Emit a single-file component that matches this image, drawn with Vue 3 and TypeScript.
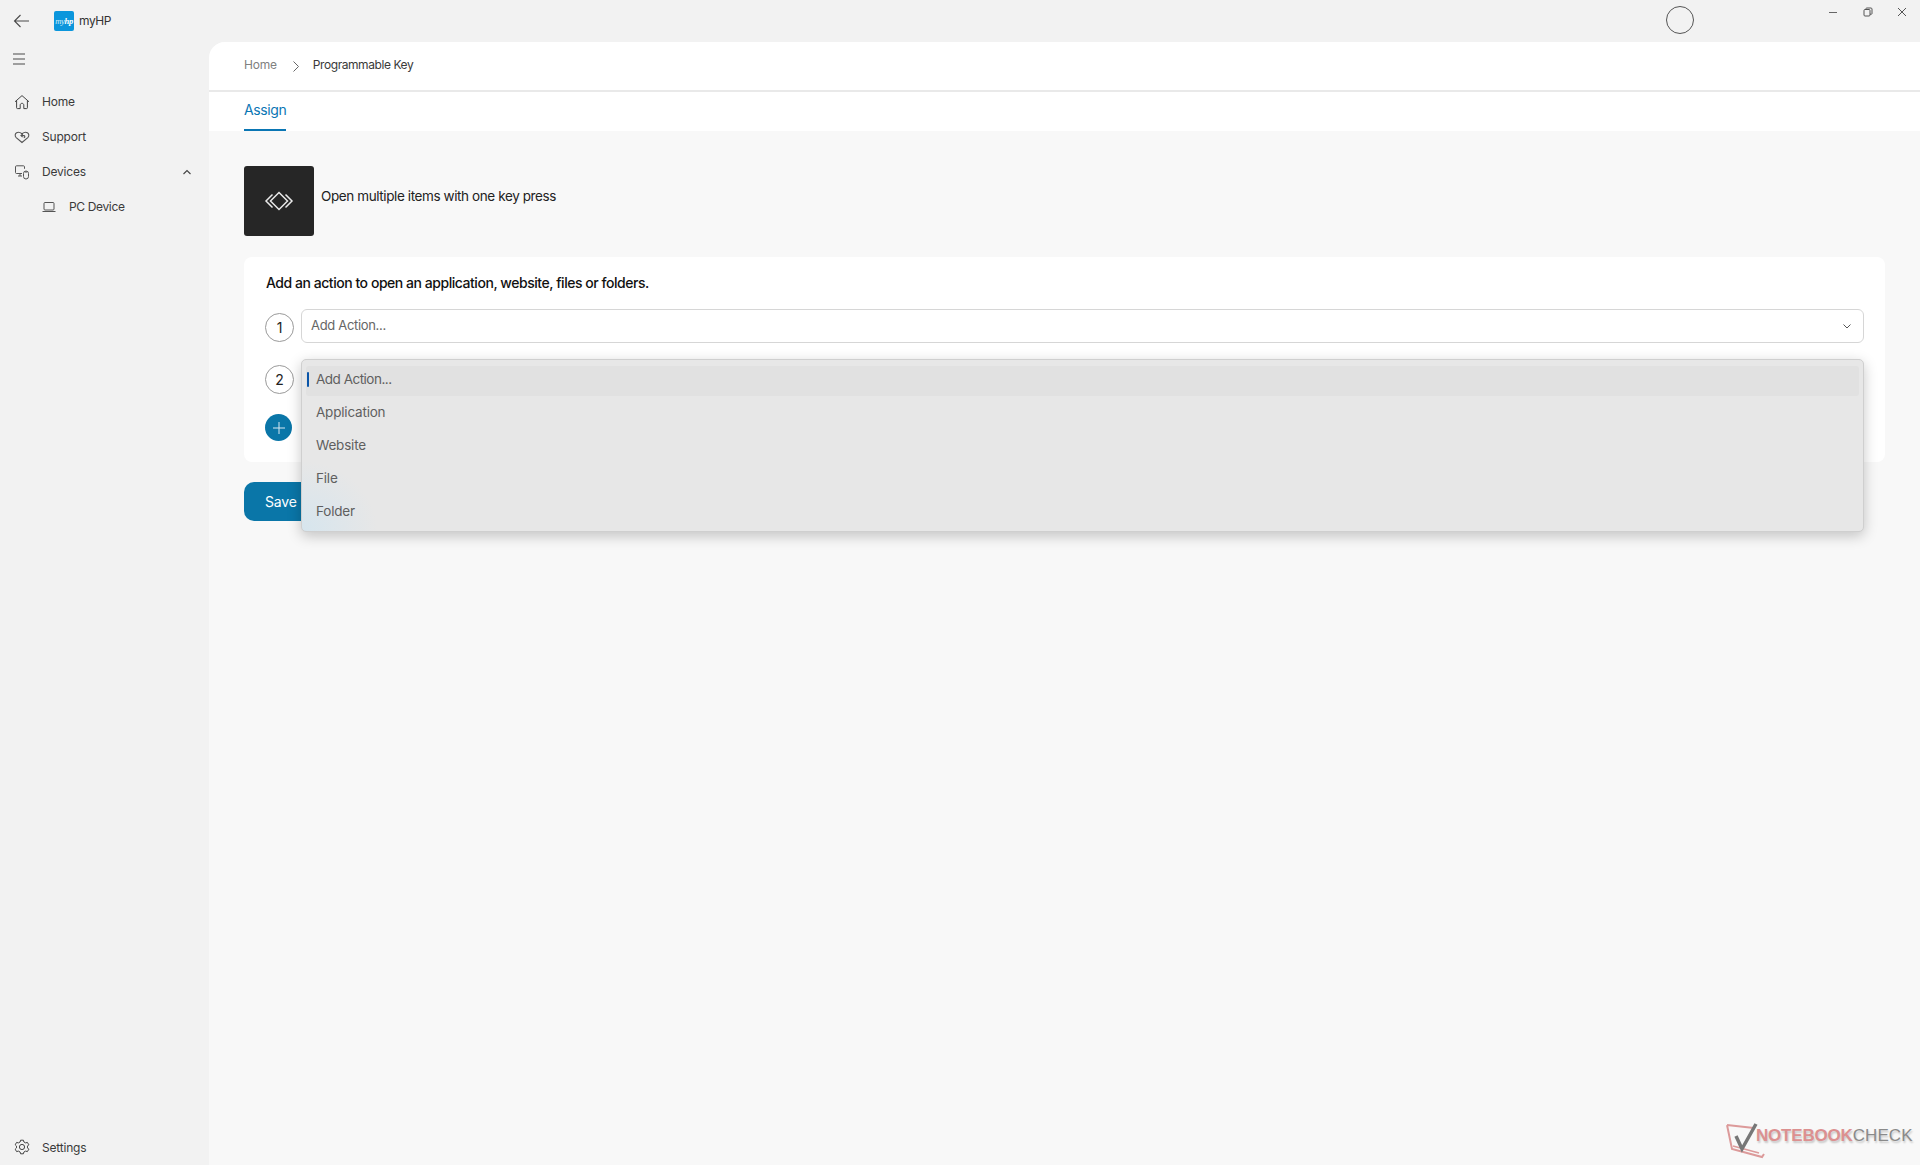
<script setup lang="ts">
const actions: string[] = ['Add Action...', 'Application', 'Website', 'File', 'Folder']
</script>

<template>
  <div class="app">
    <header class="titlebar">
      <button class="back" aria-label="Back">
        <svg width="18" height="14" viewBox="0 0 18 14" fill="none" stroke="#4a4a4a" stroke-width="1.1"><path d="M16 7H1.500M7.500 1 1.500 7l6 6" /></svg>
      </button>
      <div class="logo"><span>my<b>hp</b></span></div>
      <span class="appname">myHP</span>
      <span class="spacer"></span>
      <span class="ring"></span>
      <div class="winctl">
        <svg width="10" height="10" viewBox="0 0 10 10" fill="none" stroke="#666" stroke-width="1"><path d="M1 5.500h8" /></svg>
        <svg width="10" height="10" viewBox="0 0 10 10" fill="none" stroke="#555" stroke-width="1"><rect x="1" y="2.500" width="6" height="6.500" rx="1" /><path d="M3 2.500V1.600c0-.4.3-.6.6-.6H8c.6 0 1 .4 1 1v4.600c0 .4-.3.6-.6.6H7" /></svg>
        <svg width="10" height="10" viewBox="0 0 10 10" fill="none" stroke="#555" stroke-width="1"><path d="M1 1l8 8M9 1 1 9" /></svg>
      </div>
    </header>

    <div class="body">
      <aside class="sidebar">
        <button class="burger" aria-label="Menu">
          <svg width="14" height="12" viewBox="0 0 14 12" fill="none" stroke="#4a4a4a" stroke-width="1.1"><path d="M1 1h12M1 6h12M1 11h12" /></svg>
        </button>
        <nav class="nav">
          <a class="nav-item">
            <svg class="ico" width="16" height="16" viewBox="0 0 16 16" fill="none" stroke="#444" stroke-width="1"><path d="M1 7.800 8 1.600l7 6.200M2.600 6.600v7.200c0 .5.3.8.8.8h2.800v-3.500c0-1 .8-1.800 1.800-1.800s1.800.8 1.800 1.800v3.500h2.800c.5 0 .8-.3.8-.8V6.600" /></svg>
            <span>Home</span>
          </a>
          <a class="nav-item">
            <svg class="ico" width="16" height="16" viewBox="0 0 16 16" fill="none" stroke="#555" stroke-width="1.100"><path d="M8 13.500 2.200 8.600C.6 7 1 4.600 2.600 3.700c1.700-.9 3.600-.4 5.400 1 1.800-1.400 3.700-1.900 5.400-1 1.600.9 2 3.300.4 4.900L8 13.500Z" /><path d="M9.800 8.800c.9-.3 1.200-1 1-1.600-.3-.7-1.200-1-3.500-.7M8.800 5 7 6.500l1.600 1.500" /></svg>
            <span>Support</span>
          </a>
          <a class="nav-item">
            <svg class="ico" width="16" height="16" viewBox="0 0 16 16" fill="none" stroke="#555" stroke-width="1"><path d="M8 9.500H2.500c-.6 0-1-.4-1-1V2.800c0-.6.4-1 1-1h7c.6 0 1 .4 1 1v2M4 12h4M6 9.500V12" /><rect x="9.500" y="7" width="5" height="8" rx="2.500" /><path d="M12 7v2" /></svg>
            <span>Devices</span>
            <svg class="caret" width="10" height="6" viewBox="0 0 10 6" fill="none" stroke="#444" stroke-width="1.100"><path d="M1.500 5 5 1.500 8.500 5" /></svg>
          </a>
          <a class="nav-item sub">
            <svg class="ico" width="14" height="12" viewBox="0 0 14 12" fill="none" stroke="#555" stroke-width="1"><rect x="2" y="1.500" width="10" height="7.500" rx="1" /><path d="M.5 10.500h13" /></svg>
            <span>PC Device</span>
          </a>
        </nav>
        <a class="nav-item settings">
          <svg class="ico" width="16" height="16" viewBox="0 0 16 16" fill="none" stroke="#444" stroke-width="1"><path d="M6.600 1.200h2.800l.5 1.800 1.700.9 1.800-.5 1.400 2.400-1.300 1.300v1.800l1.300 1.300-1.400 2.400-1.800-.5-1.700.9-.5 1.800H6.600l-.5-1.800-1.700-.9-1.800.5-1.400-2.400 1.300-1.300V7.100L1.200 5.800l1.400-2.400 1.800.5 1.700-.9.5-1.800Z" /><circle cx="8" cy="8" r="2.600" /></svg>
          <span>Settings</span>
        </a>
      </aside>

      <main class="main">
        <div class="crumbs">
          <span class="crumb-home">Home</span>
          <svg width="8" height="12" viewBox="0 0 8 12" fill="none" stroke="#666" stroke-width="1"><path d="M1.500 1.500 6.500 6.500 1.500 11.500" /></svg>
          <span class="crumb-current">Programmable Key</span>
        </div>
        <div class="tabs"><span class="tab">Assign</span></div>

        <section class="content">
          <div class="intro">
            <div class="tile">
              <svg width="30" height="20" viewBox="0 0 30 20" fill="none" stroke="#e8e8e8" stroke-width="1.500"><path d="M15 1.500 23.500 10 15 18.500 6.500 10Z" /><path d="M8.500 3.500 2 10l6.500 6.500M21.500 3.500 28 10l-6.500 6.500" /></svg>
            </div>
            <p>Open multiple items with one key press</p>
          </div>

          <div class="card">
            <h2>Add an action to open an application, website, files or folders.</h2>
            <div class="row first">
              <span class="num">1</span>
              <div class="select">
                <span>Add Action...</span>
                <svg width="8" height="5" viewBox="0 0 8 5" fill="none" stroke="#555" stroke-width="1"><path d="M.5.500 4 4 7.500.500" /></svg>
              </div>
            </div>
            <div class="row second">
              <span class="num">2</span>
              <div class="select"></div>
            </div>
            <div class="row third">
              <span class="plus">
                <svg width="14" height="14" viewBox="0 0 14 14" fill="none" stroke="#d8e8f2" stroke-width="1"><path d="M7 1v12M1 7h12" /></svg>
              </span>
            </div>
          </div>

          <button class="save">Save</button>

          <ul class="menu">
            <li v-for="(a, i) in actions" :key="a" :class="{ active: i === 0 }">{{ a }}</li>
          </ul>
        </section>
      </main>
    </div>

    <div class="watermark">
      <svg width="46" height="38" viewBox="0 0 46 38" fill="none">
        <path d="M1 3 28 6M1 3l5 24 30 8 2-3" stroke="#dc9a9a" stroke-width="2" />
        <path d="M7 24l26 7" stroke="#dc9a9a" stroke-width="1.500" />
        <path d="M10 14l6 13 14-25" stroke="#777" stroke-width="3.500" />
      </svg>
      <span class="wm-a">NOTEBOOK</span><span class="wm-b">CHECK</span>
    </div>
  </div>
</template>

<style>
html, body { margin: 0; background: #f2f2f2; }
</style>

<style scoped>
.app {
  position: relative;
  width: 1920px;
  height: 1165px;
  overflow: hidden;
  display: flex;
  flex-direction: column;
  background: #f2f2f2;
  font-family: Inter, "Liberation Sans", sans-serif;
  color: #2b2b2b;
}
.titlebar {
  height: 42px;
  flex: none;
  display: flex;
  align-items: center;
}
.back {
  border: 0; background: none; padding: 0;
  margin-left: 13px;
  width: 18px; height: 14px;
  display: flex;
}
.logo {
  margin-left: 23px;
  width: 20px; height: 20px;
  background: #0b96dc;
  border-radius: 2px;
  display: flex; align-items: center; justify-content: center;
}
.logo span { color: #d5eefa; font-size: 8.500px; font-style: italic; font-family: "Liberation Serif", serif; letter-spacing: -0.3px; }
.logo b { color: #fff; }
.appname { margin-left: 5px; margin-bottom: 1px; font-size: 12px; letter-spacing: -0.4px; color: #333; }
.spacer { flex: 1; }
.ring {
  position: absolute; left: 1666px; top: 6px;
  width: 26px; height: 26px;
  border: 1px solid #555; border-radius: 50%;
}
.winctl {
  align-self: flex-start;
  margin: 7px 13px 0 0;
  display: flex; gap: 24.500px;
}
.body { flex: 1; display: flex; min-height: 0; }
.sidebar {
  width: 209px; flex: none;
  display: flex; flex-direction: column;
}
.burger {
  border: 0; background: none; padding: 0;
  margin: 11px 0 0 12px;
  width: 14px; height: 12px; display: flex;
}
.nav { margin-top: 19px; display: flex; flex-direction: column; }
.nav-item {
  height: 35px;
  display: flex; align-items: center;
  padding-left: 14px;
  font-size: 12px; letter-spacing: -0.2px; color: #3a3a3a;
}
.ico { width: 16px; margin-right: 12px; flex: none; }
.nav-item.sub { padding-left: 42px; letter-spacing: -0.35px; }
.nav-item.sub .ico { width: 14px; margin-right: 13px; }
.caret { margin-left: auto; margin-right: 17px; }
.settings { margin-top: auto; height: 36px; }
.main {
  flex: 1; min-width: 0;
  display: flex; flex-direction: column;
  background: #f8f8f8;
  border-top-left-radius: 16px;
  overflow: hidden;
}
.crumbs {
  height: 44px; flex: none;
  padding-bottom: 4px;
  background: #fff;
  border-bottom: 2px solid #e9e9e9;
  display: flex; align-items: center;
  padding-left: 35px;
  font-size: 12px; letter-spacing: -0.43px;
}
.crumb-home { color: #808080; letter-spacing: -0.2px; }
.crumb-current { color: #3a3a3a; margin-left: 13px; }
.crumbs svg { margin-left: 15px; margin-top: 4px; }
.tabs {
  height: 39px; flex: none;
  background: #fff;
  padding-left: 35px;
  display: flex;
}
.tab {
  color: #0a76b4; font-size: 14px; letter-spacing: -0.4px;
  border-bottom: 2px solid #0a76b4;
  box-sizing: border-box; height: 39px;
  padding-top: 9px;
}
.content {
  position: relative;
  flex: 1;
  padding: 35px 35px 0;
}
.intro { display: flex; align-items: center; gap: 7px; }
.tile {
  width: 70px; height: 70px;
  background: #262626; border-radius: 3px;
  display: flex; align-items: center; justify-content: center;
}
.intro p { margin: 0 0 10px; font-size: 13.500px; letter-spacing: -0.4px; color: #222; }
.card {
  margin-top: 21px;
  height: 205px; box-sizing: border-box;
  background: #fff; border-radius: 8px;
  padding: 17px 21px 0;
}
.card h2 { margin: 0 0 0 1px; font-size: 14px; font-weight: 500; line-height: 18px; letter-spacing: -0.46px; color: #111; }
.row { display: flex; align-items: center; gap: 6.500px; }
.first { margin-top: 17px; }
.second { margin-top: 18px; }
.third { margin-top: 19px; }
.num {
  width: 27px; height: 27px; flex: none;
  border: 1px solid #9a9a9a; border-radius: 50%;
  display: flex; align-items: center; justify-content: center;
  font-size: 14px; color: #222; background: #fff;
  margin-top: 2px;
}
.select {
  flex: 1;
  height: 34px; box-sizing: border-box;
  border: 1px solid #d6d6d6; border-radius: 6px;
  background: #fff;
  display: flex; align-items: center; justify-content: space-between;
  padding: 0 12px 2px 9.500px;
  font-size: 13px; letter-spacing: -0.32px; color: #666;
}
.select svg { margin-top: 2px; }
.plus {
  width: 27px; height: 27px; flex: none;
  background: #0a76a8; border-radius: 50%;
  display: flex; align-items: center; justify-content: center;
}
.save {
  margin-top: 20px;
  width: 120px; height: 39px;
  border: 0; border-radius: 10px;
  background: #0a76a8; color: #fff;
  font: inherit; font-size: 14px; letter-spacing: -0.2px;
  text-align: left; padding-left: 21px;
}
.menu {
  position: absolute;
  left: 92px; top: 228px;
  width: 1563px; height: 173px;
  box-sizing: border-box;
  margin: 0; padding: 6px 0 0 0;
  list-style: none;
  background:
    radial-gradient(ellipse 75px 70px at 0 100%, #d6e5ee, rgba(214, 229, 238, 0)),
    #e7e7e7;
  border: 1px solid #cfcfcf;
  border-radius: 5px;
  box-shadow: 0 4px 14px rgba(0, 0, 0, 0.22);
}
.menu li {
  position: relative;
  height: 33px;
  box-sizing: border-box;
  display: flex; align-items: center;
  padding-left: 10px;
  padding-bottom: 2px;
  font-size: 13.500px; letter-spacing: -0.2px; color: #5f5f5f;
  margin: 0 4px;
}
.menu li.active { background: #e1e1e1; border-radius: 3px; height: 30px; padding-bottom: 4px; letter-spacing: -0.5px; }
.menu li.active::before {
  content: "";
  position: absolute; left: 1px; top: 6px;
  width: 2px; height: 15px;
  background: #0a55a8; border-radius: 1px;
}
.watermark {
  position: absolute;
  left: 1726px; top: 1122px;
  display: flex; align-items: center;
  font-size: 17px; font-family: "Liberation Sans", sans-serif;
  text-shadow: 1px 2px 2px rgba(0, 0, 0, 0.2);
}
.wm-a { color: #dc9090; font-weight: 700; margin-left: -16px; margin-bottom: 10px; letter-spacing: -0.2px; }
.wm-b { color: #8a8a8a; margin-bottom: 10px; letter-spacing: 0.1px; }
</style>
